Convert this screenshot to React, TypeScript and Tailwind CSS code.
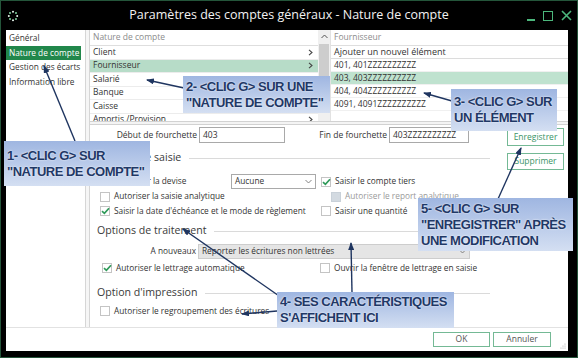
import React from "react";

function Check({ on, disabled }: { on?: boolean; disabled?: boolean }) {
  return (
    <span
      className={
        "relative inline-flex h-[10px] w-[10px] shrink-0 items-center justify-center border " +
        (disabled ? "border-[#c9d1d9] bg-[#d3dae1]" : "border-[#c4c4c4] bg-white")
      }
    >
      {on && (
        <svg width="9" height="8" viewBox="0 0 9 8" className="absolute">
          <path d="M1 4.2 L3.4 6.4 L8 1.2" fill="none" stroke="#2f9a5a" strokeWidth="1.7" />
        </svg>
      )}
    </span>
  );
}

function CheckRow({ label, on, disabled }: { label: string; on?: boolean; disabled?: boolean }) {
  return (
    <span className="flex items-center gap-[4px] whitespace-nowrap">
      <Check on={on} disabled={disabled} />
      <span className={disabled ? "text-[#9a9a9a]" : "text-[#333]"}>{label}</span>
    </span>
  );
}

function Heading({ text }: { text: string }) {
  return (
    <div className="flex h-[16px] items-center pl-[7px]">
      <span className="text-[10.6px] text-[#3a3a3a]">{text}</span>
      <span className="ml-[8px] h-px flex-1 bg-[#dadada]" />
    </div>
  );
}

function Chevron() {
  return (
    <svg width="7" height="5" viewBox="0 0 7 5">
      <path d="M0.5 1 L3.5 4 L6.5 1" fill="none" stroke="#777" strokeWidth="0.9" />
    </svg>
  );
}

function Callout({ lines, className }: { lines: string[]; className: string }) {
  return (
    <div
      className={
        "absolute flex flex-col justify-center bg-gradient-to-b from-[#9fb6e1] to-[#d4dff2] pl-[3px] font-['Liberation_Sans',Arial,sans-serif] text-[13px] font-bold leading-[16px] tracking-[-0.5px] text-[#1f3866] [text-shadow:0_0_2px_#ffffff] " +
        className
      }
    >
      {lines.map((l) => (
        <span key={l} className="whitespace-nowrap">
          {l}
        </span>
      ))}
    </div>
  );
}

const natures = ["Client", "Fournisseur", "Salarié", "Banque", "Caisse", "Amortis./Provision"];
const comptes = ["401, 401ZZZZZZZZZZ", "403, 403ZZZZZZZZZZ", "404, 404ZZZZZZZZZZ", "4091, 4091ZZZZZZZZZZ"];

export default function App() {
  return (
    <div className="relative h-[358px] w-[578px] overflow-hidden border border-[#24553a] bg-black font-['Open_Sans',sans-serif]">
      {/* title bar */}
      <div className="grid h-[29px] grid-cols-[60px_1fr_60px] items-center">
        <div className="pl-[6px]">
          <svg width="12" height="12" viewBox="0 0 12 12">
            {[0, 45, 90, 135, 180, 225, 270, 315].map((a) => (
              <circle
                key={a}
                cx={6 + 4.2 * Math.cos((a * Math.PI) / 180)}
                cy={6 + 4.2 * Math.sin((a * Math.PI) / 180)}
                r="1"
                fill={a % 90 === 0 ? "#e8f5ec" : "#7fd3a0"}
              />
            ))}
          </svg>
        </div>
        <div className="text-center text-[12.5px] text-[#f2f2f2]">
          Paramètres des comptes généraux - Nature de compte
        </div>
        <div className="flex items-center justify-end gap-[8px] pr-[5px]">
          <span className="mt-[9px] h-[2px] w-[8px] bg-[#4cb77c]" />
          <span className="h-[10px] w-[10px] border-[1.5px] border-[#4cb77c]" />
          <svg width="11" height="11" viewBox="0 0 11 11">
            <path d="M1 1 L10 10 M10 1 L1 10" stroke="#4cb77c" strokeWidth="1.6" />
          </svg>
        </div>
      </div>

      {/* window body */}
      <div className="flex h-[321px] pl-[5px]">
        <div className="flex h-full w-[562px] flex-col bg-white">
          <div className="flex h-[297px]">
            {/* nav */}
            <div className="w-[79px] whitespace-nowrap pt-[1px] text-[8.3px] text-[#333]">
              <div className="flex h-[14.5px] items-center pl-[3px]">Général</div>
              <div className="mr-[4px] flex h-[14.5px] items-center bg-[#21874b] pl-[3px] text-white">
                Nature de compte
              </div>
              <div className="flex h-[14.5px] items-center pl-[3px]">Gestion des écarts</div>
              <div className="flex h-[14.5px] items-center pl-[3px]">Information libre</div>
            </div>
            <div className="w-[5px] border-x border-[#d6d6d6] bg-[#f6f6f6]" />

            {/* right panel */}
            <div className="flex w-[478px] flex-col">
              <div className="flex h-[91px] overflow-hidden">
                <div className="w-[228px] text-[8.5px] text-[#333]">
                  <div className="flex h-[16px] items-center border-b border-[#dedede] pl-[3px] text-[#8c8c8c]">
                    Nature de compte
                  </div>
                  {natures.map((n) => (
                    <div
                      key={n}
                      className={
                        "flex h-[13.5px] items-center justify-between border-b border-[#ececec] pl-[3px] pr-[5px] " +
                        (n === "Fournisseur" ? "bg-[#b7dcc8]" : "")
                      }
                    >
                      <span>{n}</span>
                      <svg width="5" height="7" viewBox="0 0 5 7">
                        <path d="M1 0.8 L4 3.5 L1 6.2" fill="none" stroke="#444" strokeWidth="1.1" />
                      </svg>
                    </div>
                  ))}
                </div>
                <div className="flex w-[12px] flex-col items-center bg-[#f0f0f0]">
                  <div className="flex h-[13px] items-center">
                    <svg width="7" height="5" viewBox="0 0 7 5">
                      <path d="M0.5 4 L3.5 1 L6.5 4" fill="none" stroke="#555" strokeWidth="1" />
                    </svg>
                  </div>
                  <div className="mt-[1px] h-[36px] w-[10px] bg-[#cdcdcd]" />
                </div>
                <div className="flex-1 border-l border-[#e2e2e2] text-[8.5px] text-[#333]">
                  <div className="flex h-[16px] items-center border-b border-[#dedede] pl-[3px] text-[#8c8c8c]">
                    Fournisseur
                  </div>
                  <div className="flex h-[13px] items-center border-b border-[#dcdcdc] pl-[3px] text-[9px]">
                    Ajouter un nouvel élément
                  </div>
                  {comptes.map((c) => (
                    <div
                      key={c}
                      className={
                        "flex h-[13px] items-center border-b border-[#f0f0f0] pl-[3px] " +
                        (c.startsWith("403") ? "bg-[#bfe2cf]" : "")
                      }
                    >
                      {c}
                    </div>
                  ))}
                </div>
              </div>
              <div className="h-[4px] border-y border-[#d2d2d2] bg-[#f4f4f4]" />

              {/* form */}
              <div className="flex flex-1 text-[8.3px] text-[#333]">
                <div className="flex w-[410px] flex-col pr-[10px]">
                  <div className="mt-[2px] flex h-[16px] items-center whitespace-nowrap text-[8.5px]">
                    <span className="w-[109px] pr-[2px] text-right">Début de fourchette</span>
                    <span className="flex h-[16px] w-[86px] items-center border border-[#a9a9a9] pl-[3px]">403</span>
                    <span className="w-[104px] pr-[2px] text-right">Fin de fourchette</span>
                    <span className="flex h-[16px] w-[80px] items-center border border-[#a9a9a9] pl-[3px]">
                      403ZZZZZZZZZZ
                    </span>
                  </div>
                  <div className="mt-[7px]">
                    <Heading text="Options de saisie" />
                  </div>
                  <div className="mt-[8px] flex h-[15px] items-center whitespace-nowrap">
                    <span className="w-[141px] pl-[25px]">Autoriser la devise</span>
                    <span className="flex h-[15px] w-[85px] items-center justify-between border border-[#a9a9a9] px-[3px]">
                      Aucune
                      <Chevron />
                    </span>
                    <span className="ml-[5px]">
                      <CheckRow label="Saisir le compte tiers" on />
                    </span>
                  </div>
                  <div className="flex h-[15px] items-center">
                    <span className="w-[231px] pl-[10px]">
                      <CheckRow label="Autoriser la saisie analytique" />
                    </span>
                    <span className="pl-[10px]">
                      <CheckRow label="Autoriser le report analytique" disabled />
                    </span>
                  </div>
                  <div className="flex h-[14px] items-center">
                    <span className="w-[231px] pl-[10px]">
                      <CheckRow label="Saisir la date d'échéance et le mode de règlement" on />
                    </span>
                    <CheckRow label="Saisir une quantité" />
                  </div>
                  <div className="mt-[5px]">
                    <Heading text="Options de traitement" />
                  </div>
                  <div className="mt-[5px] flex h-[15px] items-center whitespace-nowrap">
                    <span className="w-[108px] pr-[2px] text-right">A nouveaux</span>
                    <span className="flex h-[15px] w-[272px] items-center justify-between border border-[#cdcdcd] bg-[#e5e5e5] px-[3px]">
                      Reporter les écritures non lettrées
                      <Chevron />
                    </span>
                  </div>
                  <div className="mt-[2px] flex h-[14px] items-center">
                    <span className="w-[230px] pl-[12px]">
                      <CheckRow label="Autoriser le lettrage automatique" on />
                    </span>
                    <CheckRow label="Ouvrir la fenêtre de lettrage en saisie" />
                  </div>
                  <div className="mt-[10px]">
                    <Heading text="Option d'impression" />
                  </div>
                  <div className="mt-[3px] flex h-[14px] items-center pl-[10px]">
                    <CheckRow label="Autoriser le regroupement des écritures" />
                  </div>
                </div>
                <div className="ml-auto mr-[4px] flex w-[57px] flex-col text-[8.5px] text-[#3a9467]">
                  <span className="mt-[3px] flex h-[18px] items-center justify-center border border-[#74b995]">
                    Enregistrer
                  </span>
                  <span className="mt-[7px] flex h-[17px] items-center justify-center border border-[#74b995]">
                    Supprimer
                  </span>
                </div>
              </div>
            </div>
          </div>

          {/* footer */}
          <div className="relative flex flex-1 items-center justify-end gap-[3px] border-t border-[#e2e2e2] pr-[17px] text-[8.5px] text-[#555]">
            <span className="flex h-[15px] w-[57px] items-center justify-center border border-[#74b995]">OK</span>
            <span className="flex h-[15px] w-[58px] items-center justify-center border border-[#74b995]">Annuler</span>
            <svg width="6" height="6" viewBox="0 0 6 6" className="absolute bottom-[2px] right-[2px]">
              <circle cx="5" cy="1" r="0.6" fill="#aaa" />
              <circle cx="3" cy="3" r="0.6" fill="#aaa" />
              <circle cx="5" cy="3" r="0.6" fill="#aaa" />
              <circle cx="1" cy="5" r="0.6" fill="#aaa" />
              <circle cx="3" cy="5" r="0.6" fill="#aaa" />
              <circle cx="5" cy="5" r="0.6" fill="#aaa" />
            </svg>
          </div>
        </div>
      </div>

      {/* annotation arrows */}
      <svg width="578" height="358" className="pointer-events-none absolute left-[-1px] top-[-1px]">
        <defs>
          <marker id="ah" markerWidth="8" markerHeight="6" refX="7" refY="3" orient="auto" markerUnits="userSpaceOnUse">
            <path d="M0 0 L8 3 L0 6 Z" fill="#1f3560" />
          </marker>
        </defs>
        <g stroke="#1f3560" strokeWidth="1.4" fill="none" markerEnd="url(#ah)">
          <line x1="75" y1="141" x2="44" y2="66" />
          <line x1="184" y1="88" x2="147" y2="80" />
          <line x1="452" y1="101" x2="424" y2="93" />
          <line x1="282" y1="298" x2="183" y2="229" />
          <line x1="352" y1="292" x2="351" y2="243" />
          <line x1="277" y1="311" x2="242" y2="314" />
          <line x1="498" y1="199" x2="521" y2="148" />
        </g>
      </svg>

      {/* callouts */}
      <Callout className="left-[3px] top-[140px] h-[45px] w-[146px]" lines={["1- <CLIC G> SUR", "\"NATURE DE COMPTE\""]} />
      <Callout className="left-[182px] top-[75px] h-[37px] w-[147px]" lines={["2- <CLIC G> SUR UNE", "\"NATURE DE COMPTE\""]} />
      <Callout className="left-[450px] top-[88px] h-[42px] w-[106px]" lines={["3- <CLIC G> SUR", "UN ÉLÉMENT"]} />
      <Callout className="left-[417px] top-[197px] h-[53px] w-[155px]" lines={["5- <CLIC G> SUR", "\"ENREGISTRER\" APRÈS", "UNE MODIFICATION"]} />
      <Callout className="left-[276px] top-[291px] h-[36px] w-[177px]" lines={["4- SES CARACTÉRISTIQUES", "S'AFFICHENT ICI"]} />
    </div>
  );
}
